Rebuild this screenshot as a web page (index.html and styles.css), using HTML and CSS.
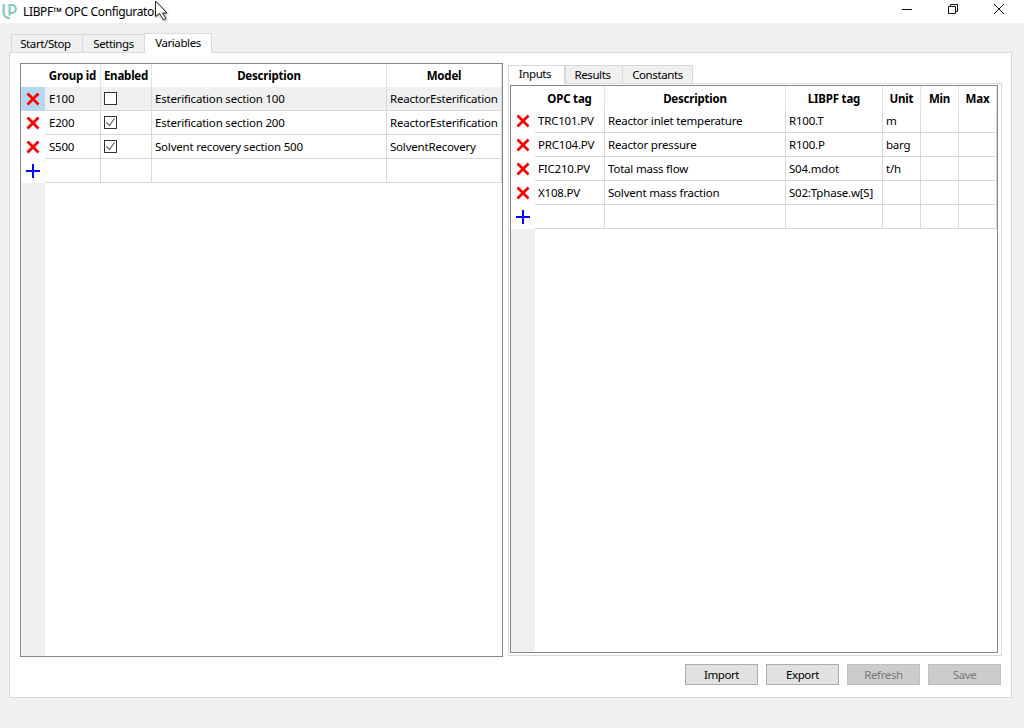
FILE: index.html
```html
<!DOCTYPE html>
<html lang="en">
<head>
<meta charset="utf-8">
<title>LIBPF OPC Configurator</title>
<link rel="stylesheet" href="styles.css">
</head>
<body>
<div class="window">
  <header class="titlebar">
    <svg class="logo" width="16" height="17" viewBox="0 0 16 17"><path d="M2.6 1v8.2a6 6 0 0 0 6 6" fill="none" stroke="#7fc9bf" stroke-width="2.2"/><path d="M8.6 12.5V2h2.2a4 4 0 0 1 0 8H8.6" fill="none" stroke="#7fc9bf" stroke-width="2.2"/></svg>
    <span class="app-title">LIBPF™ OPC Configurator</span>
    <div class="winctl">
      <svg width="12" height="12" viewBox="0 0 12 12"><path d="M1 6.5h10" stroke="#111" fill="none"/></svg>
      <svg width="12" height="12" viewBox="0 0 12 12"><path d="M1.5 3.5h7v7h-7zM3.5 3.5v-2h7v7h-2" stroke="#111" fill="none"/></svg>
      <svg width="12" height="12" viewBox="0 0 12 12"><path d="M1 1l10 10M11 1L1 11" stroke="#111" fill="none"/></svg>
    </div>
  </header>
  <main class="content">
    <nav class="tabs main-tabs">
      <span class="tab tab-a">Start/Stop</span>
      <span class="tab tab-b">Settings</span>
      <span class="tab tab-c active">Variables</span>
    </nav>
    <section class="pane">
      <div class="split">
        <div class="frame left-frame">
          <div class="rowhead">
            <div class="rh corner"></div>
            <div class="rh selected"><svg class="ic" viewBox="0 0 14 14"><path d="M1.5 1.5l11 11M12.5 1.5l-11 11" stroke="#f00" stroke-width="2.8"/></svg></div>
            <div class="rh"><svg class="ic" viewBox="0 0 14 14"><path d="M1.5 1.5l11 11M12.5 1.5l-11 11" stroke="#f00" stroke-width="2.8"/></svg></div>
            <div class="rh"><svg class="ic" viewBox="0 0 14 14"><path d="M1.5 1.5l11 11M12.5 1.5l-11 11" stroke="#f00" stroke-width="2.8"/></svg></div>
            <div class="rh"><svg class="ic" viewBox="0 0 14 14"><path d="M0 7h14M7 0v14" stroke="#00f" stroke-width="2"/></svg></div>
          </div>
          <div class="grid grid-left">
            <div class="h">Group id</div><div class="h">Enabled</div><div class="h">Description</div><div class="h">Model</div>
            <div class="c sel">E100</div><div class="c sel"><span class="check"></span></div><div class="c sel">Esterification section 100</div><div class="c sel">ReactorEsterification</div>
            <div class="c">E200</div><div class="c"><span class="check"><svg width="11" height="11" viewBox="0 0 11 11"><path d="M1.5 5.5l3 3 5-7" fill="none" stroke="#555" stroke-width="1.1"/></svg></span></div><div class="c">Esterification section 200</div><div class="c">ReactorEsterification</div>
            <div class="c">S500</div><div class="c"><span class="check"><svg width="11" height="11" viewBox="0 0 11 11"><path d="M1.5 5.5l3 3 5-7" fill="none" stroke="#555" stroke-width="1.1"/></svg></span></div><div class="c">Solvent recovery section 500</div><div class="c">SolventRecovery</div>
            <div class="c"></div><div class="c"></div><div class="c"></div><div class="c"></div>
          </div>
        </div>
        <div class="right-col">
          <nav class="tabs sub-tabs">
            <span class="tab tab-d active">Inputs</span>
            <span class="tab tab-e">Results</span>
            <span class="tab tab-f">Constants</span>
          </nav>
          <div class="subpane">
            <div class="frame right-frame">
              <div class="rowhead">
                <div class="rh corner"></div>
                <div class="rh"><svg class="ic" viewBox="0 0 14 14"><path d="M1.5 1.5l11 11M12.5 1.5l-11 11" stroke="#f00" stroke-width="2.8"/></svg></div>
                <div class="rh"><svg class="ic" viewBox="0 0 14 14"><path d="M1.5 1.5l11 11M12.5 1.5l-11 11" stroke="#f00" stroke-width="2.8"/></svg></div>
                <div class="rh"><svg class="ic" viewBox="0 0 14 14"><path d="M1.5 1.5l11 11M12.5 1.5l-11 11" stroke="#f00" stroke-width="2.8"/></svg></div>
                <div class="rh"><svg class="ic" viewBox="0 0 14 14"><path d="M1.5 1.5l11 11M12.5 1.5l-11 11" stroke="#f00" stroke-width="2.8"/></svg></div>
                <div class="rh"><svg class="ic" viewBox="0 0 14 14"><path d="M0 7h14M7 0v14" stroke="#00f" stroke-width="2"/></svg></div>
              </div>
              <div class="grid grid-right">
                <div class="h">OPC tag</div><div class="h">Description</div><div class="h">LIBPF tag</div><div class="h">Unit</div><div class="h">Min</div><div class="h">Max</div>
                <div class="c">TRC101.PV</div><div class="c">Reactor inlet temperature</div><div class="c">R100.T</div><div class="c">m</div><div class="c"></div><div class="c"></div>
                <div class="c">PRC104.PV</div><div class="c">Reactor pressure</div><div class="c">R100.P</div><div class="c">barg</div><div class="c"></div><div class="c"></div>
                <div class="c">FIC210.PV</div><div class="c">Total mass flow</div><div class="c">S04.mdot</div><div class="c">t/h</div><div class="c"></div><div class="c"></div>
                <div class="c">X108.PV</div><div class="c">Solvent mass fraction</div><div class="c">S02:Tphase.w[S]</div><div class="c"></div><div class="c"></div><div class="c"></div>
                <div class="c"></div><div class="c"></div><div class="c"></div><div class="c"></div><div class="c"></div><div class="c"></div>
              </div>
            </div>
          </div>
        </div>
      </div>
      <div class="actions">
        <button class="btn">Import</button>
        <button class="btn">Export</button>
        <button class="btn" disabled>Refresh</button>
        <button class="btn" disabled>Save</button>
      </div>
    </section>
  </main>
  <svg class="cursor" width="16" height="22" viewBox="0 0 16 22"><path d="M1.5 1v15.5l4-3 4 6.5 2.5-1.5-3.5-5.5H13z" fill="#fff" stroke="#222" stroke-width="1"/></svg>
</div>
</body>
</html>
```
FILE: styles.css
```css
* { box-sizing: border-box; }
html, body { margin: 0; padding: 0; }
body { font-family: "Noto Sans", "Open Sans", sans-serif; font-size: 11.5px; letter-spacing: -0.2px; color: #000; background: #f0f0f0; }
.window { position: relative; width: 1024px; height: 728px; overflow: hidden; background: #f0f0f0; }

.titlebar { height: 23px; background: #fff; display: flex; align-items: center; padding-left: 1px; }
.logo { margin-right: 6px; }
.app-title { font-size: 12px; letter-spacing: -0.35px; }
.winctl { margin-left: auto; display: flex; gap: 34px; padding-right: 19px; margin-top: -5px; }

.content { padding: 9px 12px 0 9px; }
.tabs { display: flex; align-items: flex-end; }
.main-tabs { height: 20px; padding-left: 2px; }
.tab { height: 18px; background: #f0f0f0; border: 1px solid #d9d9d9; border-bottom: 0; border-right-width: 0; display: flex; align-items: center; justify-content: center; letter-spacing: -0.4px; }
.tab.active { background: #fff; border-right-width: 1px; position: relative; }
.tab-a { width: 71px; padding-right: 3px; }
.tab-b { width: 62px; }
.tab-c { width: 68px; height: 20px; padding-bottom: 2px; margin-bottom: -1px; z-index: 1; }
.tab-d { width: 57px; height: 19px; padding-bottom: 3px; padding-right: 3px; margin-bottom: -1px; z-index: 1; }
.tab-e { width: 57px; padding-right: 3px; }
.tab-f { width: 71px; border-right-width: 1px; }

.pane { width: 1003px; height: 646px; background: #fff; border: 1px solid #d9d9d9; padding: 10px 9px 0 10px; }
.split { display: flex; height: 594px; }
.frame { border: 1px solid #828790; background: #fff; display: flex; }
.left-frame { width: 483px; height: 594px; padding-right: 1px; }
.right-col { margin-left: 5px; width: 494px; }
.sub-tabs { height: 20px; }
.subpane { height: 573px; border: 1px solid #d9d9d9; padding: 1px; width: 494px; }
.right-frame { width: 488px; height: 568px; padding-right: 1px; }

.rowhead { width: 24px; flex: none; background: #f0f0f0; }
.rh { height: 24px; background: #fff; display: flex; align-items: center; justify-content: center; }
.rh.corner { height: 23px; }
.rh.selected { background: #b5d7f0; }
.ic { width: 14px; height: 14px; display: block; }

.grid { display: grid; grid-auto-rows: 24px; align-content: start; flex: 1; }
.grid-left { grid-template-columns: 56px 51px 235px 115px; grid-template-rows: 23px; }
.grid-right { grid-template-columns: 70px 181px 97px 38px 38px 38px; grid-template-rows: 23px; }
.h { font-weight: 700; display: flex; align-items: center; justify-content: center; border-right: 1px solid #e5e5e5; white-space: nowrap; }
.grid-right .h { padding-top: 1px; }
.c { border-right: 1px solid #d9d9d9; border-bottom: 1px solid #d9d9d9; display: flex; align-items: center; padding-left: 3px; white-space: nowrap; overflow: hidden; }
.grid-left .c:nth-child(4n+1) { padding-left: 4px; }
.c.sel { background: #f0f0f0; }
.check { width: 13px; height: 13px; border: 1px solid #333; background: #fff; display: flex; align-items: center; justify-content: center; }

.actions { display: flex; justify-content: flex-end; gap: 8px; margin-top: 7px; margin-right: 1px; }
.btn { width: 73px; height: 21px; background: #e1e1e1; border: 1px solid #adadad; font: inherit; letter-spacing: -0.4px; color: #000; padding: 0; }
.btn:disabled { background: #ccc; border-color: #bfbfbf; color: #787878; }

.cursor { position: absolute; left: 154px; top: 0; filter: drop-shadow(1px 1px 1px rgba(0,0,0,.3)); }
```
